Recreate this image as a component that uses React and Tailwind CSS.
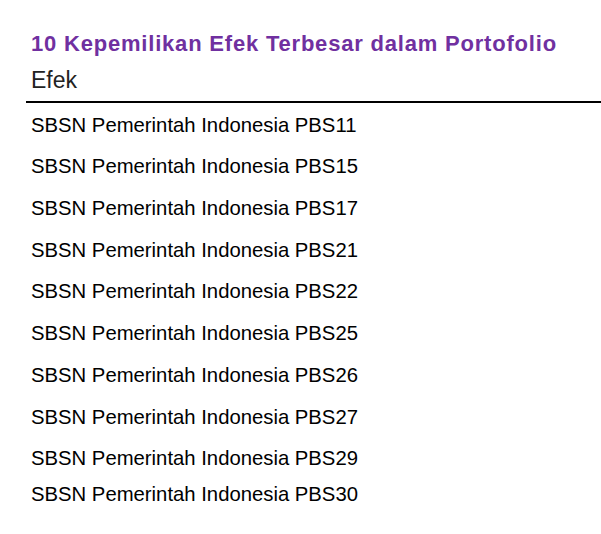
import React from 'react';

const holdings = [
  'SBSN Pemerintah Indonesia PBS11',
  'SBSN Pemerintah Indonesia PBS15',
  'SBSN Pemerintah Indonesia PBS17',
  'SBSN Pemerintah Indonesia PBS21',
  'SBSN Pemerintah Indonesia PBS22',
  'SBSN Pemerintah Indonesia PBS25',
  'SBSN Pemerintah Indonesia PBS26',
  'SBSN Pemerintah Indonesia PBS27',
  'SBSN Pemerintah Indonesia PBS29',
  'SBSN Pemerintah Indonesia PBS30',
];

const App = () => {
  return (
    <div
      className="w-[601px] h-[534px] bg-white pl-[26px] pt-[32px]"
      style={{ fontFamily: '"Liberation Sans", Arial, sans-serif' }}
    >
      <h1 className="pl-[5px] text-[22px] leading-[24px] font-bold tracking-[0.8px] text-[#7030a0]">
        10 Kepemilikan Efek Terbesar dalam Portofolio
      </h1>

      <div className="mt-[12px] flex flex-col">
        <div className="pl-[5px] pb-[9px] border-b-2 border-black text-[23px] leading-[24px] text-[#222]">
          Efek
        </div>
        {holdings.map((name, i) => (
          <div
            key={name}
            className={
              i === 8
                ? 'pl-[5px] pt-[11.7px] h-[35.5px] text-[20.3px] leading-[20px] text-black'
                : 'pl-[5px] pt-[11.7px] h-[41.7px] text-[20.3px] leading-[20px] text-black'
            }
          >
            {name}
          </div>
        ))}
      </div>
    </div>
  );
};

export default App;
